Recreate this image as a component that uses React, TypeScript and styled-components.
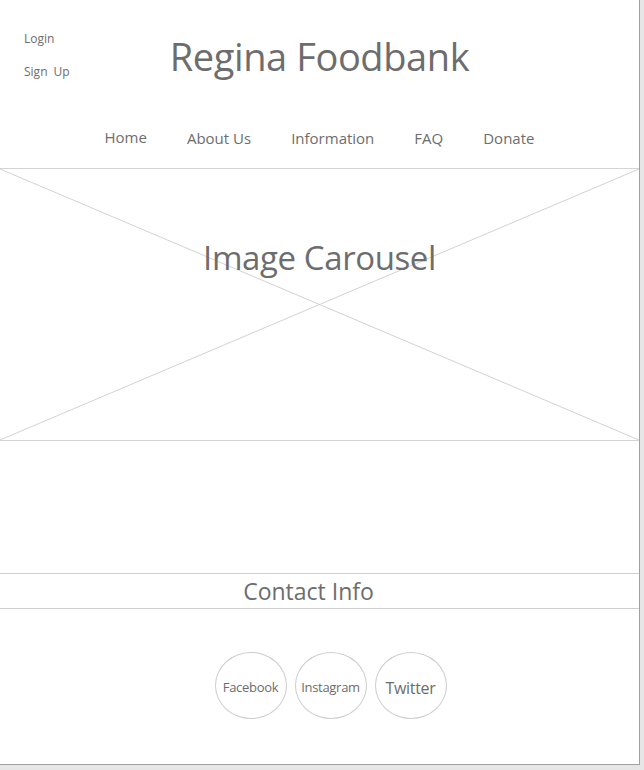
import React from "react";
import styled, { createGlobalStyle } from "styled-components";

const Global = createGlobalStyle`
  html, body { margin: 0; padding: 0; background: #e6e6e6; }
  body { font-family: "Open Sans", "Noto Sans", "Liberation Sans", sans-serif; color: #6d6d6d; }
`;

const Canvas = styled.div`
  width: 639px;
  height: 764px;
  background: #fff;
  border-right: 1px solid #a0a0a0;
  border-bottom: 1px solid #a0a0a0;
  display: flex;
  flex-direction: column;
  overflow: hidden;
`;

const Header = styled.header`
  display: grid;
  grid-template-columns: 1fr auto 1fr;
  align-items: start;
  height: 112px;
`;

const AuthLinks = styled.div`
  display: flex;
  flex-direction: column;
  gap: 16px;
  padding: 30px 0 0 24px;
`;

const AuthLink = styled.a`
  font-size: 12px;
  line-height: 17px;
  color: #6d6d6d;
  text-decoration: none;
  word-spacing: 3px;
`;

const Title = styled.h1`
  margin: 0;
  padding-top: 30px;
  font-size: 38px;
  font-weight: 400;
  line-height: 52px;
  color: #6d6d6d;
  letter-spacing: -0.4px;
`;

const Nav = styled.nav`
  display: flex;
  justify-content: center;
  gap: 40px;
  height: 57px;
  border-bottom: 1px solid #d4d4d4;
  box-sizing: border-box;
`;

const NavItem = styled.a<{ $lift?: boolean }>`
  font-size: 15px;
  line-height: 22px;
  color: #6d6d6d;
  text-decoration: none;
  margin-top: ${(p) => (p.$lift ? "14px" : "15px")};
`;

const Carousel = styled.section`
  position: relative;
  height: 272px;
  border-bottom: 1px solid #d4d4d4;
  box-sizing: border-box;
  display: flex;
  justify-content: center;
`;

const Cross = styled.svg`
  position: absolute;
  inset: 0;
  width: 100%;
  height: 100%;
`;

const CarouselLabel = styled.div`
  position: relative;
  margin-top: 66px;
  font-size: 33px;
  line-height: 46px;
  color: #6d6d6d;
  letter-spacing: -0.4px;
`;

const Spacer = styled.div`
  height: 132px;
  border-bottom: 1px solid #cfcfcf;
`;

const ContactBar = styled.div`
  height: 34px;
  border-bottom: 1px solid #cfcfcf;
  display: flex;
  justify-content: center;
  padding-right: 22px;
  font-size: 23px;
  line-height: 34px;
  color: #6d6d6d;
`;

const Socials = styled.div`
  display: flex;
  justify-content: center;
  gap: 8px;
  padding: 43px 0 0 22px;
`;

const Bubble = styled.a<{ $size: number }>`
  width: 70px;
  height: 65px;
  box-sizing: content-box;
  border: 1px solid #cccccc;
  border-radius: 50%;
  display: flex;
  align-items: center;
  justify-content: center;
  padding-top: 0;
  font-size: ${(p) => p.$size}px;
  line-height: ${(p) => p.$size + 8}px;
  color: #6d6d6d;
  text-decoration: none;
  letter-spacing: -0.3px;
`;

const BubbleText = styled.span`
  margin-top: 4px;
`;

export default function App() {
  return (
    <>
      <Global />
      <Canvas>
        <Header>
          <AuthLinks>
            <AuthLink href="#">Login</AuthLink>
            <AuthLink href="#">Sign Up</AuthLink>
          </AuthLinks>
          <Title>Regina Foodbank</Title>
          <div />
        </Header>
        <Nav>
          <NavItem href="#" $lift>Home</NavItem>
          <NavItem href="#">About Us</NavItem>
          <NavItem href="#">Information</NavItem>
          <NavItem href="#">FAQ</NavItem>
          <NavItem href="#">Donate</NavItem>
        </Nav>
        <Carousel>
          <Cross viewBox="0 0 639 271" preserveAspectRatio="none">
            <line x1="0" y1="0" x2="639" y2="271" stroke="#d2d2d2" strokeWidth="1" />
            <line x1="0" y1="271" x2="639" y2="0" stroke="#d2d2d2" strokeWidth="1" />
          </Cross>
          <CarouselLabel>Image Carousel</CarouselLabel>
        </Carousel>
        <Spacer />
        <ContactBar>Contact Info</ContactBar>
        <Socials>
          <Bubble href="#" $size={13}><BubbleText>Facebook</BubbleText></Bubble>
          <Bubble href="#" $size={13}><BubbleText>Instagram</BubbleText></Bubble>
          <Bubble href="#" $size={16}><BubbleText>Twitter</BubbleText></Bubble>
        </Socials>
      </Canvas>
    </>
  );
}
